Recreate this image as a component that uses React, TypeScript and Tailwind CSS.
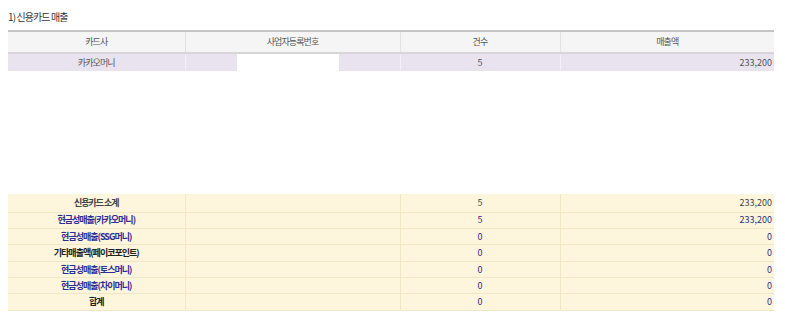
import React from "react";

const font = { fontFamily: '"Noto Sans CJK KR", "Noto Sans", sans-serif' };

type Row = { label: string; cls: string; count: string; amount: string; numCls: string };

const rows: Row[] = [
  { label: "신용카드 소계", cls: "text-[#444]", count: "5", amount: "233,200", numCls: "text-[#444]" },
  { label: "현금성매출(카카오머니)", cls: "text-[#2e2e96]", count: "5", amount: "233,200", numCls: "text-[#2e2e80]" },
  { label: "현금성매출(SSG머니)", cls: "text-[#2e2e96]", count: "0", amount: "0", numCls: "text-[#2e2e80]" },
  { label: "기타매출액(페이코포인트)", cls: "text-[#222]", count: "0", amount: "0", numCls: "text-[#2e2e80]" },
  { label: "현금성매출(토스머니)", cls: "text-[#2e2e96]", count: "0", amount: "0", numCls: "text-[#2e2e80]" },
  { label: "현금성매출(차이머니)", cls: "text-[#2e2e96]", count: "0", amount: "0", numCls: "text-[#2e2e80]" },
  { label: "합계", cls: "text-[#222]", count: "0", amount: "0", numCls: "text-[#2e2e80]" },
];

export default function App() {
  return (
    <div className="w-[785px] h-[320px] bg-white text-[9px] text-[#555] overflow-hidden" style={font}>
      <div className="pt-[10px] pl-[8px] text-[10px] leading-[14px] tracking-[-0.9px] text-[#333]">1) 신용카드 매출</div>
      <table className="ml-[8px] mt-[6px] w-[766px] border-collapse table-fixed">
        <colgroup>
          <col className="w-[177px]" />
          <col className="w-[215px]" />
          <col className="w-[160px]" />
          <col className="w-[214px]" />
        </colgroup>
        <thead>
          <tr className="h-[22px] bg-[#f5f5f5] border-t-2 border-t-[#c4c4c4] border-b-2 border-b-[#d6d6d6]">
            <th className="font-normal text-center tracking-[-0.9px] border-r border-[#e2e2e2]">카드사</th>
            <th className="font-normal text-center tracking-[-0.9px] border-r border-[#e2e2e2]">사업자등록번호</th>
            <th className="font-normal text-center tracking-[-0.9px] border-r border-[#e2e2e2]">건수</th>
            <th className="font-normal text-center tracking-[-0.9px]">매출액</th>
          </tr>
        </thead>
        <tbody>
          <tr className="h-[17px] bg-[#e9e3f0]">
            <td className="text-center tracking-[-0.9px] border-r border-[#f4f0f7]">카카오머니</td>
            <td className="border-r border-[#f4f0f7] p-0">
              <div className="ml-[51px] w-[102px] h-[17px] bg-white" />
            </td>
            <td className="text-center border-r border-[#f4f0f7]">5</td>
            <td className="text-right pr-[2px]">233,200</td>
          </tr>
        </tbody>
      </table>

      <table className="ml-[8px] mt-[123px] w-[766px] border-collapse table-fixed bg-[#fdf6dd]">
        <colgroup>
          <col className="w-[177px]" />
          <col className="w-[215px]" />
          <col className="w-[160px]" />
          <col className="w-[214px]" />
        </colgroup>
        <tbody>
          {rows.map((r, i) => (
            <tr key={i} className={`${i === 0 ? "h-[18px]" : "h-[16.4px]"} border-b border-[#f1e7c6]`}>
              <td className={`text-center font-bold tracking-[-1px] border-r border-[#f1e7c6] ${r.cls}`}>{r.label}</td>
              <td className="border-r border-[#f1e7c6]" />
              <td className={`text-center border-r border-[#f1e7c6] ${r.numCls}`}>{r.count}</td>
              <td className={`text-right pr-[2px] ${r.numCls}`}>{r.amount}</td>
            </tr>
          ))}
        </tbody>
      </table>
    </div>
  );
}
